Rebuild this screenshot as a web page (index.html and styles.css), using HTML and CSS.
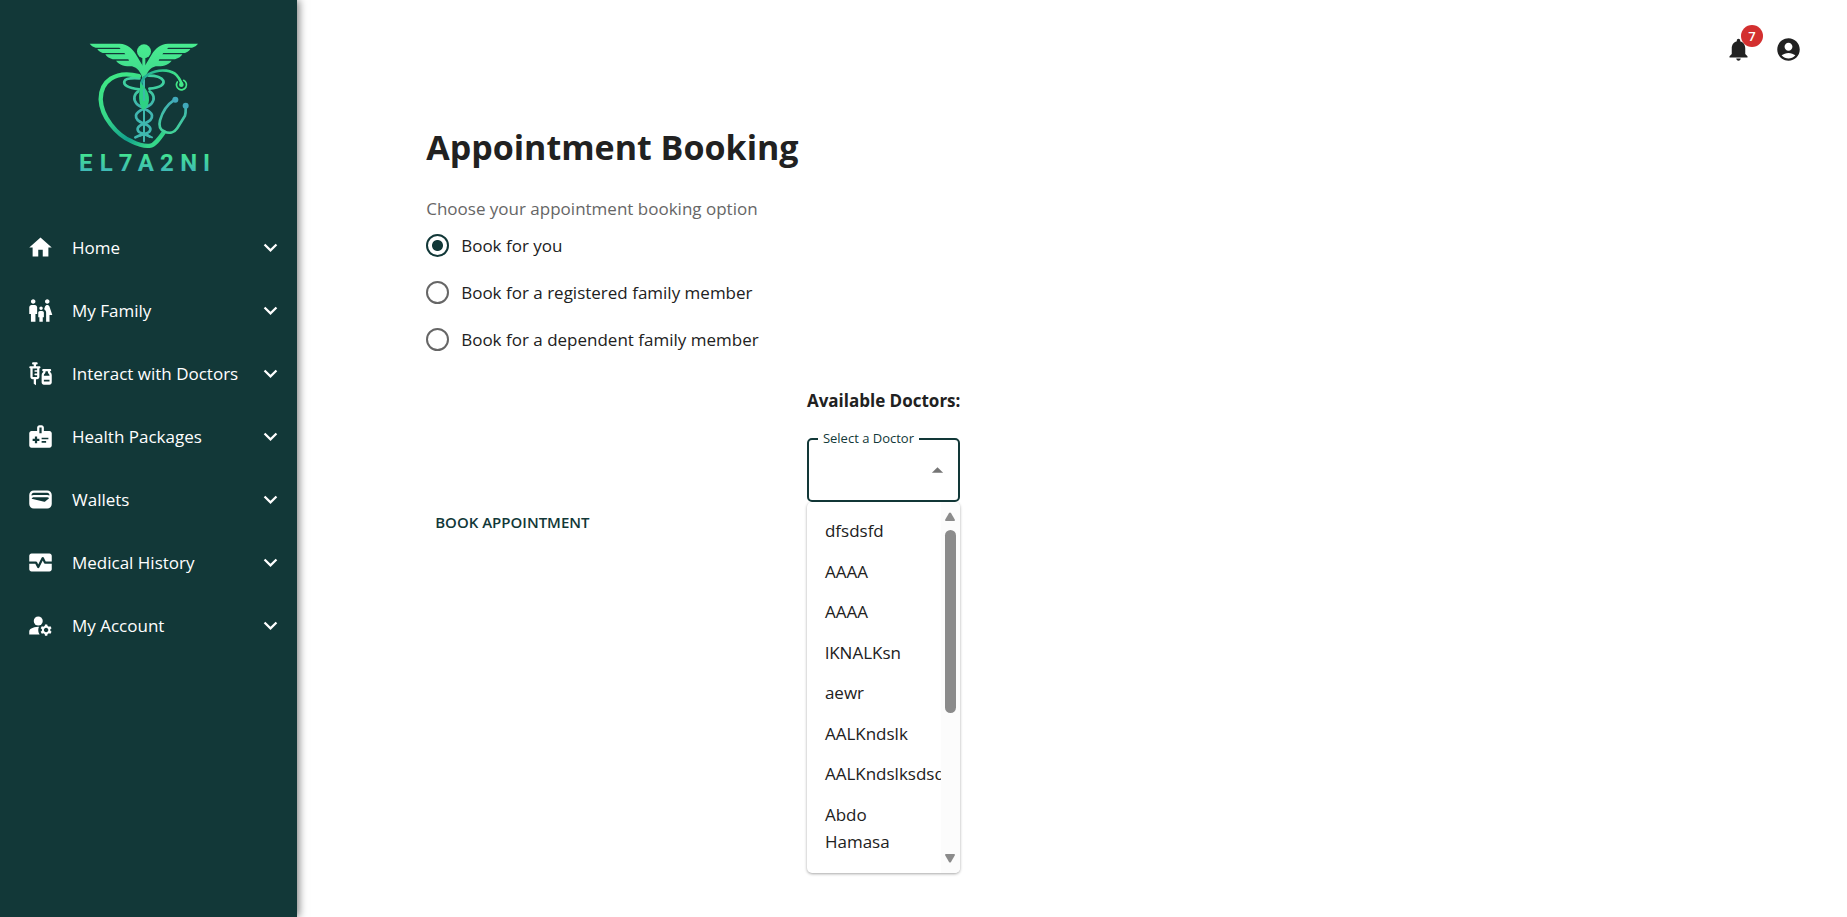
FILE: index.html
```html
<!DOCTYPE html>
<html lang="en">
<head>
<meta charset="utf-8">
<title>Appointment Booking</title>
<link rel="stylesheet" href="styles.css">
</head>
<body>
<div class="app">
  <aside class="sidebar">
    <a class="brand" href="#" aria-label="EL7A2NI">
      <svg class="brand-logo" viewBox="0 0 450 450">
        <defs>
          <linearGradient id="wing" x1="0" y1="40" x2="0" y2="150" gradientUnits="userSpaceOnUse"><stop offset="0" stop-color="#48ec90"/><stop offset="1" stop-color="#3fd98c"/></linearGradient>
          <linearGradient id="heart" x1="90" y1="140" x2="230" y2="350" gradientUnits="userSpaceOnUse"><stop offset="0" stop-color="#40ea84"/><stop offset=".45" stop-color="#35d689"/><stop offset=".8" stop-color="#12a08c"/><stop offset="1" stop-color="#35d689"/></linearGradient>
          <linearGradient id="hose" x1="214" y1="0" x2="335" y2="0" gradientUnits="userSpaceOnUse"><stop offset="0" stop-color="#1fa896"/><stop offset="1" stop-color="#42e888"/></linearGradient>
          <linearGradient id="tube" x1="0" y1="120" x2="0" y2="340" gradientUnits="userSpaceOnUse"><stop offset="0" stop-color="#3fe08a"/><stop offset=".5" stop-color="#3fb5b0"/><stop offset="1" stop-color="#3fb8b0"/></linearGradient>
          <linearGradient id="scope" x1="0" y1="200" x2="0" y2="350" gradientUnits="userSpaceOnUse"><stop offset="0" stop-color="#41abb8"/><stop offset="1" stop-color="#43e28c"/></linearGradient>
          <linearGradient id="word" x1="0" y1="370" x2="0" y2="424" gradientUnits="userSpaceOnUse"><stop offset="0" stop-color="#43e590"/><stop offset="1" stop-color="#3fb9b6"/></linearGradient>
        </defs>
        <g fill="url(#wing)">
          <path d="M59 41H149C172 42 187 55 197 72C207 89 213 99 219 108V150C213 126 202 113 186 109C166 109 150 107 138 92H177L175 88H128C117 84 109 80 106 73H166L163 69H98C88 65 84 61 82 57H152L148 53H77C69 50 63 47 59 41Z"/>
          <path d="M384 41H294C271 42 256 55 246 72C236 89 230 99 224 108V150C230 126 241 113 257 109C277 109 293 107 305 92H266L268 88H315C326 84 334 80 337 73H277L280 69H345C355 65 359 61 361 57H291L295 53H366C374 50 380 47 384 41Z"/>
          <circle cx="222" cy="64" r="21"/>
          <path d="M217 80H226V140H217Z"/>
        </g>
        <g fill="none" stroke-linecap="round">
          <path d="M208 178C172 174 160 165 163 154C167 143 191 144 208 145M238 176C273 172 284 163 280 152C275 143 260 137 236 137" stroke="#3fcfa0" stroke-width="8"/>
          <path d="M205 184C192 192 189 208 199 220C211 234 243 240 246 256C248 270 235 276 222 281C202 287 199 298 207 306C215 312 231 312 239 320M239 184C252 192 255 208 245 220C233 234 201 240 198 256C196 270 209 276 222 281C242 287 245 298 237 306C229 312 214 313 196 322" stroke="url(#tube)" stroke-width="8"/>
          <path d="M222 150V334M222 312L246 322M206 318L222 312" stroke="#3fb8ae" stroke-width="6"/>
          <path d="M207 138C135 120 92 154 92 208C94 260 140 315 185 334C203 343 225 350 242 347C254 345 265 330 282 306" stroke="url(#heart)" stroke-width="13"/>
          <path d="M214 168C211 139 251 118 289 122C318 126 326 141 335 160" stroke="url(#hose)" stroke-width="8"/>
          <path d="M311 211C291 224 276 250 270 271C266 287 271 299 282 304C298 312 313 308 322 294L345 257C348 248 347 239 347 230" stroke="url(#scope)" stroke-width="8"/>
          <path d="M341 151A15 15 0 1 1 322 156" stroke="#42e888" stroke-width="5"/>
        </g>
        <path d="M211 155C221 172 239 182 237 211C235 231 225 237 218 240C208 225 205 202 209 184Z" fill="#2dd184"/>
        <path d="M222 176V212" stroke="#3fb8ae" stroke-width="5"/>
        <circle cx="334" cy="164" r="7" fill="#42e888"/>
        <circle cx="316" cy="209" r="9" fill="#41a9bb"/>
        <circle cx="347" cy="227" r="9" fill="#41a9bb"/>
        <text class="brand-name" x="27 89 146 203 270 331 399" y="423" fill="url(#word)">EL7A2NI</text>
      </svg>
    </a>
    <nav class="menu" aria-label="Main">
      <button class="menu-item" type="button"><svg class="icon" viewBox="0 0 24 24"><path d="M10 20v-6h4v6h5v-8h3L12 3 2 12h3v8z"/></svg><span>Home</span><svg class="icon chevron" viewBox="0 0 24 24"><path d="M16.59 8.59 12 13.17 7.41 8.59 6 10l6 6 6-6z"/></svg></button>
      <button class="menu-item" type="button"><svg class="icon" viewBox="0 0 24 24"><path d="M16 4c0-1.11.89-2 2-2s2 .89 2 2-.89 2-2 2-2-.89-2-2zm4 18v-6h2.500l-2.540-7.630C19.680 7.550 18.920 7 18.060 7h-.12c-.86 0-1.630.55-1.900 1.370l-.86 2.580c1.080.6 1.820 1.730 1.820 3.050v8h3zm-7.500-10.500c.83 0 1.500-.67 1.500-1.500s-.67-1.500-1.500-1.500S11 9.170 11 10s.67 1.500 1.500 1.500zM5.500 6c1.110 0 2-.89 2-2s-.89-2-2-2-2 .89-2 2 .89 2 2 2zm2 16v-7H9V9c0-1.100-.9-2-2-2H4c-1.100 0-2 .9-2 2v6h1.500v7h4zm6.500 0v-4h1v-4c0-.82-.68-1.500-1.500-1.500h-2c-.82 0-1.500.68-1.500 1.500v4h1v4h3z"/></svg><span>My Family</span><svg class="icon chevron" viewBox="0 0 24 24"><path d="M16.59 8.59 12 13.17 7.41 8.59 6 10l6 6 6-6z"/></svg></button>
      <button class="menu-item" type="button"><svg class="icon" viewBox="0 0 24 24"><path d="M11 5.500H8V4h.5c.55 0 1-.45 1-1s-.45-1-1-1h-3c-.55 0-1 .45-1 1s.45 1 1 1H6v1.500H3c-.55 0-1 .45-1 1s.45 1 1 1V15c0 1.100.9 2 2 2h1v4l2 1.500V17h1c1.100 0 2-.9 2-2V7.500c.55 0 1-.45 1-1s-.45-1-1-1zM9 9H7.250c-.41 0-.75.34-.75.75s.34.75.75.75H9V12H7.250c-.41 0-.75.34-.75.75s.34.75.75.75H9V15H5V7.500h4V9z"/><path fill-rule="evenodd" d="M20.500 10.500V10c.55 0 1-.45 1-1s-.45-1-1-1h-6c-.55 0-1 .45-1 1s.45 1 1 1v.5c0 .5-1.500 1.160-1.500 3V20c0 1.100.9 2 2 2h5c1.100 0 2-.9 2-2v-6.500c0-1.840-1.500-2.500-1.500-3zM16.500 10.500V10h2v.5c0 1.600 1.500 2 1.500 3v.5h-5v-.5c0-1 1.500-1.500 1.500-3zM15 17.500h5V19h-5z"/></svg><span>Interact with Doctors</span><svg class="icon chevron" viewBox="0 0 24 24"><path d="M16.59 8.59 12 13.17 7.41 8.59 6 10l6 6 6-6z"/></svg></button>
      <button class="menu-item" type="button"><svg class="icon" viewBox="0 0 24 24"><path d="M20 7h-5V4c0-1.100-.9-2-2-2h-2c-1.100 0-2 .9-2 2v3H4c-1.100 0-2 .9-2 2v11c0 1.100.9 2 2 2h16c1.100 0 2-.9 2-2V9c0-1.100-.9-2-2-2zm-9-3h2v5h-2V4zm0 12H9v2H7v-2H5v-2h2v-2h2v2h2v2zm2-1.500V13h6v1.500h-6zm0 3V16h4v1.500h-4z"/></svg><span>Health Packages</span><svg class="icon chevron" viewBox="0 0 24 24"><path d="M16.59 8.59 12 13.17 7.41 8.59 6 10l6 6 6-6z"/></svg></button>
      <button class="menu-item" type="button"><svg class="icon" viewBox="0 0 24 24"><path d="M18 4H6C3.790 4 2 5.790 2 8v8c0 2.210 1.790 4 4 4h12c2.210 0 4-1.790 4-4V8c0-2.210-1.790-4-4-4zm-1.860 9.770c-.24.2-.57.28-.88.2L4.150 11.250C4.450 10.520 5.160 10 6 10h12c.67 0 1.260.34 1.630.84l-3.490 2.930zM6 6h12c1.100 0 2 .9 2 2v.55c-.59-.34-1.270-.55-2-.55H6c-.73 0-1.410.21-2 .55V8c0-1.100.9-2 2-2z"/></svg><span>Wallets</span><svg class="icon chevron" viewBox="0 0 24 24"><path d="M16.59 8.59 12 13.17 7.41 8.59 6 10l6 6 6-6z"/></svg></button>
      <button class="menu-item" type="button"><svg class="icon" viewBox="0 0 24 24"><path d="M15.110 12.450 14 10.240l-3.110 6.210c-.16.34-.51.55-.89.55s-.73-.21-.89-.55L7.380 13H2v5c0 1.100.9 2 2 2h16c1.100 0 2-.9 2-2v-5h-6c-.38 0-.73-.21-.89-.55z"/><path d="M20 4H4c-1.100 0-2 .9-2 2v5h6c.38 0 .73.21.89.55L10 13.760l3.110-6.210c.34-.68 1.450-.68 1.790 0L16.620 11H22V6c0-1.100-.9-2-2-2z"/></svg><span>Medical History</span><svg class="icon chevron" viewBox="0 0 24 24"><path d="M16.59 8.59 12 13.17 7.41 8.59 6 10l6 6 6-6z"/></svg></button>
      <button class="menu-item" type="button"><svg class="icon" viewBox="0 0 24 24"><circle cx="10" cy="8" r="4"/><path d="M10.670 13.020C10.450 13.010 10.230 13 10 13c-2.420 0-4.680.67-6.610 1.820C2.510 15.340 2 16.320 2 17.350V20h9.260C10.470 18.870 10 17.490 10 16c0-1.070.25-2.070.67-2.980zM20.750 16c0-.22-.03-.42-.06-.63l1.140-1.010-1-1.730-1.450.49c-.32-.27-.68-.48-1.080-.63L18 11h-2l-.3 1.490c-.4.15-.76.36-1.080.63l-1.450-.49-1 1.730 1.140 1.010c-.03.21-.06.41-.06.63s.03.42.06.63l-1.140 1.010 1 1.730 1.450-.49c.32.27.68.48 1.080.63L16 21h2l.3-1.490c.4-.15.76-.36 1.080-.63l1.450.49 1-1.730-1.140-1.010c.03-.21.06-.41.06-.63zM17 18c-1.100 0-2-.9-2-2s.9-2 2-2 2 .9 2 2-.9 2-2 2z"/></svg><span>My Account</span><svg class="icon chevron" viewBox="0 0 24 24"><path d="M16.59 8.59 12 13.17 7.41 8.59 6 10l6 6 6-6z"/></svg></button>
    </nav>
  </aside>
  <div class="page">
    <header class="topbar">
      <button class="icon-button" type="button" aria-label="Notifications"><svg class="icon" viewBox="0 0 24 24"><path d="M12 22c1.100 0 2-.9 2-2h-4c0 1.100.89 2 2 2zm6-6v-5c0-3.070-1.640-5.640-4.500-6.320V4c0-.83-.67-1.500-1.500-1.500s-1.500.67-1.500 1.500v.68C7.630 5.360 6 7.920 6 11v5l-2 2v1h16v-1l-2-2z"/></svg><span class="badge">7</span></button>
      <button class="icon-button" type="button" aria-label="Account"><svg class="icon" viewBox="0 0 24 24"><path d="M12 2C6.480 2 2 6.480 2 12s4.480 10 10 10 10-4.480 10-10S17.520 2 12 2zm0 4c1.930 0 3.500 1.570 3.500 3.500S13.930 13 12 13s-3.500-1.570-3.500-3.500S10.070 6 12 6zm0 14c-2.030 0-4.430-.82-6.140-2.880C7.550 15.800 9.680 15 12 15s4.450.8 6.140 2.120C16.430 19.180 14.030 20 12 20z"/></svg></button>
    </header>
    <main class="content">
      <h1>Appointment Booking</h1>
      <form class="booking">
        <fieldset class="options">
          <legend>Choose your appointment booking option</legend>
          <label class="option"><input type="radio" name="who" checked><span>Book for you</span></label>
          <label class="option"><input type="radio" name="who"><span>Book for a registered family member</span></label>
          <label class="option"><input type="radio" name="who"><span>Book for a dependent family member</span></label>
        </fieldset>
        <section class="doctors">
          <h2>Available Doctors:</h2>
          <div class="combo">
            <label class="combo-label" for="doctor">Select a Doctor</label>
            <input class="combo-input" id="doctor" type="text" role="combobox" aria-expanded="true" aria-controls="doctor-list" autocomplete="off">
            <button class="combo-toggle" type="button" aria-label="Close"><svg class="icon" viewBox="0 0 24 24"><path d="m7 14 5-5 5 5z"/></svg></button>
            <div class="popup">
              <ul class="listbox" id="doctor-list" role="listbox" aria-label="Doctors">
                <li role="option">dfsdsfd</li>
                <li role="option">AAAA</li>
                <li role="option">AAAA</li>
                <li role="option">lKNALKsn</li>
                <li role="option">aewr</li>
                <li role="option">AALKndslk</li>
                <li role="option">AALKndslksdsd</li>
                <li role="option">Abdo Hamasa</li>
              </ul>
              <div class="scrollbar" aria-hidden="true">
                <svg class="scroll-arrow" viewBox="0 0 12 10"><path d="M5 1Q6 0 7 1L11 8Q11 9 10 9H2Q1 9 1 8Z"/></svg>
                <div class="track"><div class="thumb"></div></div>
                <svg class="scroll-arrow" viewBox="0 0 12 10"><path d="M5 9Q6 10 7 9L11 2Q11 1 10 1H2Q1 1 1 2Z"/></svg>
              </div>
            </div>
          </div>
        </section>
        <button class="submit" type="submit">BOOK APPOINTMENT</button>
      </form>
    </main>
  </div>
</div>
</body>
</html>
```
FILE: styles.css
```css
* { box-sizing: border-box; }
body { margin: 0; font-family: "Open Sans", "Noto Sans", sans-serif; font-size: 17px; line-height: 27px; color: #212121; background: #fff; }
button, input { font: inherit; color: inherit; }
button { border: 0; background: none; padding: 0; cursor: pointer; }
.app { display: flex; min-height: 100vh; }
.icon { width: 27px; height: 27px; fill: currentColor; flex: none; display: block; }

.sidebar { width: 297px; flex: none; background: #123838; color: #fff; box-shadow: 2px 0 8px rgba(0, 0, 0, .5); }
.brand { display: block; width: 150px; margin: 30px auto 36px 70px; }
.brand-logo { display: block; width: 150px; height: 150px; }
.brand-name { font-family: Roboto, sans-serif; font-size: 72px; font-weight: 700; }
.menu { display: flex; flex-direction: column; }
.menu-item { display: flex; align-items: center; gap: 18px; height: 63px; padding: 0 13px 0 27px; text-align: left; }
.chevron { margin-left: auto; }

.page { flex: 1; min-width: 0; }
.topbar { display: flex; justify-content: flex-end; gap: 23px; padding: 36px 45px 0 0; }
.icon-button { position: relative; }
.badge { position: absolute; top: -11px; left: 16px; width: 22px; height: 22px; border-radius: 50%; background: #d32f2f; color: #fff; font-size: 13px; line-height: 22px; font-weight: 600; }

.content { width: 83.33%; margin: 0 auto; padding-top: 60px; }
h1 { margin: 0 0 24px; font-size: 34px; line-height: 48px; font-weight: 700; }
.booking { width: 70.8%; }
.options { margin: 0; border: 0; padding: 0; min-width: 0; }
legend { padding: 0; color: #666; }
.option { display: flex; align-items: center; gap: 12px; height: 47px; }
.option input { appearance: none; width: 23px; height: 23px; margin: 0; border: 2px solid #666; border-radius: 50%; }
.option input:checked { border-color: #123838; background: radial-gradient(circle, #123838 5px, transparent 6px); }

.doctors { width: 153px; margin: 24px auto 6px; }
h2 { margin: 0 0 24px; font-size: 17px; line-height: 27px; font-weight: 700; white-space: nowrap; }
.combo { position: relative; display: flex; align-items: center; height: 64px; border: 2px solid #123838; border-radius: 5px; padding: 0 7px 0 14px; }
.combo-label { position: absolute; top: -11px; left: 9px; padding: 0 5px; background: #fff; color: #123838; font-size: 13px; line-height: 18px; white-space: nowrap; }
.combo-input { flex: 1; min-width: 0; border: 0; outline: 0; padding: 0; background: none; }
.combo-toggle { color: #757575; }
.popup { position: absolute; top: 62px; left: -2px; right: -2px; height: 371px; display: flex; background: #fff; border-radius: 5px; box-shadow: 0 1px 3px rgba(0, 0, 0, .35); overflow: hidden; }
.listbox { flex: 1; min-width: 0; margin: 0; padding: 9px 0 12px; list-style: none; overflow: hidden; display: flex; flex-direction: column; justify-content: space-between; }
.listbox li { padding: 6px 18px; }
.scrollbar { width: 19px; padding: 10px 4px; display: flex; flex-direction: column; align-items: center; gap: 8px; background: #fcfcfc; }
.scroll-arrow { width: 12px; height: 10px; fill: #8b8b8b; }
.track { flex: 1; width: 11px; }
.thumb { height: 58%; border-radius: 6px; background: #8b8b8b; }
.submit { padding: 0 9px; color: #123838; font-size: 15px; font-weight: 600; }
```
